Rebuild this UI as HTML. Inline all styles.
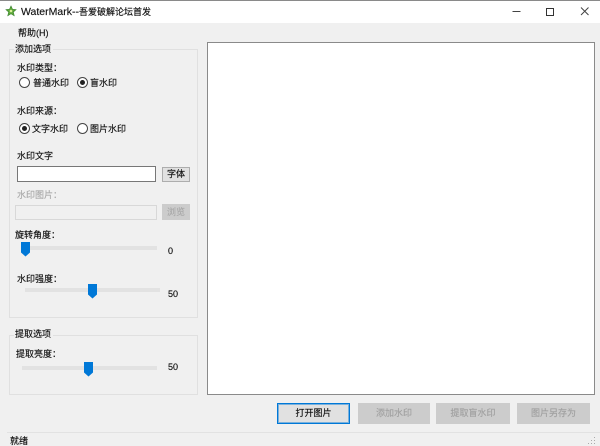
<!DOCTYPE html>
<html><head><meta charset="utf-8"><style>
html,body{margin:0;padding:0;background:#f0f0f0}
body{width:600px;height:446px;overflow:hidden;position:relative}
#w{position:absolute;left:0;top:0;width:600px;height:446px;overflow:hidden;background:#f0f0f0;filter:blur(.3px);font-family:"Liberation Sans","Noto Sans CJK SC",sans-serif;font-size:9px;color:#111;-webkit-text-stroke:.15px currentColor}
.a{position:absolute;white-space:nowrap;line-height:12px}
.box{position:absolute;box-sizing:border-box}
.g{border:1px solid #e0e0e0}
.leg{background:#f0f0f0;padding:0 2px 0 1px}
.r{position:absolute;box-sizing:border-box;width:11px;height:11px;border:1px solid #444;border-radius:50%;background:#fff}
.r.on:after{content:"";position:absolute;left:2px;top:2px;width:5px;height:5px;border-radius:50%;background:#222}
.tr{position:absolute;background:#e2e2e2;box-sizing:border-box;height:4px}
.b{position:absolute;box-sizing:border-box;text-align:center;background:#ccc;color:#a0a0a0}
.dis{color:#aaa}
</style></head><body><div id="w">
<div class="box" style="left:0;top:0;width:600px;height:23px;background:#fff;border-top:1px solid #8a8a8a"></div>
<svg class="box" style="left:5px;top:5px" width="12" height="12" viewBox="0 0 14 14"><path d="M7 1 8.8 5 13 5.4 9.8 8.2 10.8 12.6 7 10.3 3.2 12.6 4.2 8.2 1 5.4 5.2 5Z" fill="#5fa83a" stroke="#2f7a2a" stroke-width=".6"/><circle cx="7" cy="7" r="1.5" fill="#d9ef9a"/></svg>
<div class="a" style="left:21px;top:6px;font-size:10.5px">WaterMark--<span style="font-size:9px">吾爱破解论坛首发</span></div>
<svg class="box" style="left:500px;top:0" width="100" height="23" viewBox="0 0 100 23"><path d="M12.5 11.5H20.5" stroke="#444"/><rect x="46.5" y="8.5" width="7" height="7" fill="none" stroke="#333"/><path d="M81 7.5 88.5 15M88.5 7.5 81 15" stroke="#444" fill="none"/></svg>
<div class="a" style="left:18px;top:26.5px">帮助(H)</div>

<div class="box g" style="left:9px;top:49px;width:189px;height:269px"></div>
<div class="a leg" style="left:14px;top:43px">添加选项</div>
<div class="a" style="left:17px;top:62px">水印类型：</div>
<div class="r" style="left:19px;top:77px"></div><div class="a" style="left:33px;top:76.5px">普通水印</div>
<div class="r on" style="left:77px;top:77px"></div><div class="a" style="left:90px;top:76.5px">盲水印</div>
<div class="a" style="left:17px;top:105px">水印来源：</div>
<div class="r on" style="left:19px;top:123px"></div><div class="a" style="left:32px;top:122.5px">文字水印</div>
<div class="r" style="left:77px;top:123px"></div><div class="a" style="left:90px;top:122.5px">图片水印</div>
<div class="a" style="left:17px;top:150px">水印文字</div>
<div class="box" style="left:17px;top:166px;width:139px;height:16px;background:#fff;border:1px solid #777"></div>
<div class="box" style="left:162px;top:167px;width:28px;height:15px;background:#e1e1e1;border:1px solid #adadad;text-align:center;line-height:13px">字体</div>
<div class="a dis" style="left:17px;top:189px">水印图片：</div>
<div class="box" style="left:15px;top:205px;width:142px;height:15px;background:#f0f0f0;border:1px solid #d8d8d8"></div>
<div class="b" style="left:162px;top:204px;width:28px;height:16px;line-height:16px;color:#a8a8a8">浏览</div>

<div class="a" style="left:15px;top:229px">旋转角度：</div>
<div class="tr" style="left:22px;top:246px;width:135px"></div>
<svg class="box" style="left:21px;top:242px" width="10" height="15"><path d="M0 0H9V10.5L4.5 14.5 0 10.5Z" fill="#0078d7"/></svg>
<div class="a" style="left:168px;top:245px">0</div>

<div class="a" style="left:17px;top:273px">水印强度：</div>
<div class="tr" style="left:25px;top:288px;width:135px"></div>
<svg class="box" style="left:88px;top:284px" width="10" height="15"><path d="M0 0H9V10.5L4.5 14.5 0 10.5Z" fill="#0078d7"/></svg>
<div class="a" style="left:168px;top:288px">50</div>

<div class="box g" style="left:9px;top:335px;width:189px;height:60px"></div>
<div class="a leg" style="left:14px;top:328px">提取选项</div>
<div class="a" style="left:16px;top:348px">提取亮度：</div>
<div class="tr" style="left:22px;top:366px;width:135px"></div>
<svg class="box" style="left:84px;top:362px" width="10" height="15"><path d="M0 0H9V10.5L4.5 14.5 0 10.5Z" fill="#0078d7"/></svg>
<div class="a" style="left:168px;top:361px">50</div>

<div class="box" style="left:207px;top:42px;width:388px;height:353px;background:#fff;border:1px solid #8a8a8a"></div>

<div class="box" style="left:277px;top:403px;width:73px;height:21px;background:#e1e1e1;border:1px solid #0078d7;box-shadow:inset 0 0 0 1px rgba(0,120,215,.45);text-align:center;line-height:19px">打开图片</div>
<div class="b" style="left:358px;top:403px;width:72px;height:21px;line-height:21px">添加水印</div>
<div class="b" style="left:436px;top:403px;width:74px;height:21px;line-height:21px">提取盲水印</div>
<div class="b" style="left:517px;top:403px;width:73px;height:21px;line-height:21px">图片另存为</div>

<div class="box" style="left:7px;top:432px;width:593px;height:1px;background:#e2e2e2"></div>
<div class="a" style="left:10px;top:435px">就绪</div>
<svg class="box" style="left:586px;top:437px" width="12" height="9" fill="#aaa"><rect x="8" y="0" width="1" height="1"/><rect x="5" y="3" width="1" height="1"/><rect x="8" y="3" width="1" height="1"/><rect x="2" y="6" width="1" height="1"/><rect x="5" y="6" width="1" height="1"/><rect x="8" y="6" width="1" height="1"/></svg>
</div></body></html>
